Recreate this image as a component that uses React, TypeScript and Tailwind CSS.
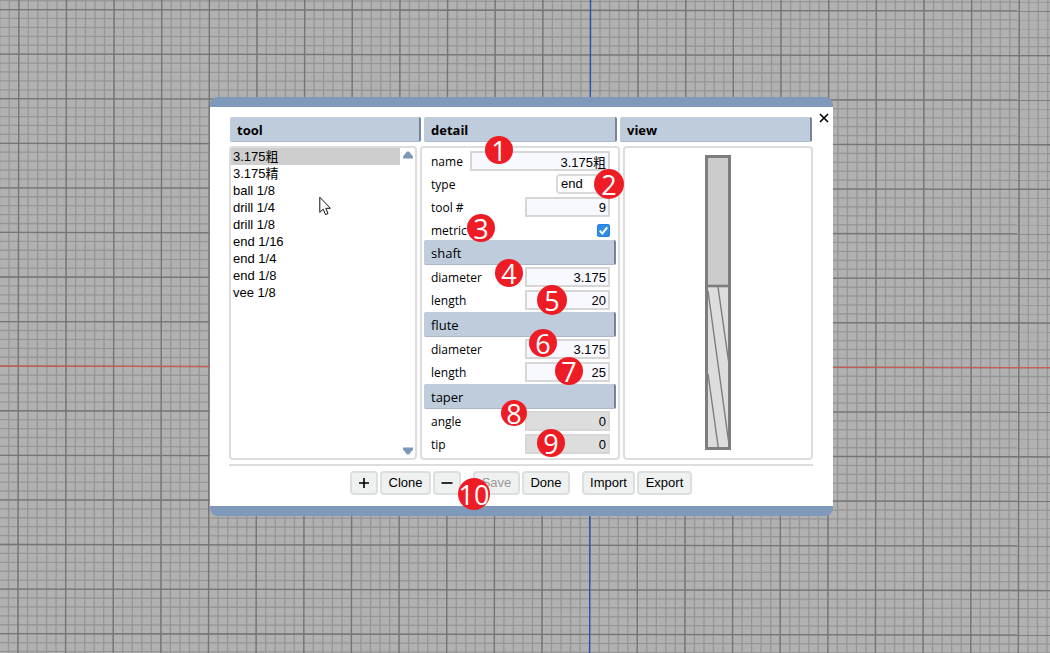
import React, { useState } from "react";

const MAJOR_X = 47.64;
const MAJOR_Y = 44.58;
const ORIGIN_X = 590;
const ORIGIN_Y = 367;

function range(from: number, to: number) {
  return Array.from({ length: to - from + 1 }, (_, i) => from + i);
}

function Workspace() {
  return (
    <svg className="absolute inset-0 h-full w-full" aria-hidden="true">
      <g transform={`rotate(0.08 ${ORIGIN_X} ${ORIGIN_Y})`}>
        <g stroke="#969696" strokeWidth="1.3">
          {range(-70, 200).map((i) => {
            const x = ORIGIN_X + (i * MAJOR_X) / 5;
            return <line key={`x${i}`} x1={x} x2={x} y1={-50} y2={2000} />;
          })}
          {range(-50, 180).map((i) => {
            const y = ORIGIN_Y + (i * MAJOR_Y) / 5;
            return <line key={`y${i}`} x1={-50} x2={2600} y1={y} y2={y} />;
          })}
        </g>
        <g stroke="#757575" strokeWidth="1.3">
          {range(-14, 40).map((i) => {
            const x = ORIGIN_X + i * MAJOR_X;
            return <line key={`x${i}`} x1={x} x2={x} y1={-50} y2={2000} />;
          })}
          {range(-10, 36).map((i) => {
            const y = ORIGIN_Y + i * MAJOR_Y;
            return <line key={`y${i}`} x1={-50} x2={2600} y1={y} y2={y} />;
          })}
        </g>
        <line x1={-50} x2={2600} y1={ORIGIN_Y} y2={ORIGIN_Y} stroke="#cf5a50" strokeWidth="1.2" />
        <line x1={ORIGIN_X} x2={ORIGIN_X} y1={-50} y2={2000} stroke="#2455b8" strokeWidth="1.3" />
      </g>
    </svg>
  );
}

function Heading({ children }: { children: React.ReactNode }) {
  return (
    <h2 className="h-[25px] rounded-xs border-r-2 border-b border-r-[#778496] border-b-[#a9b9cb] bg-[#bfccdc] pl-[7px] text-[13px] leading-[26px] font-bold">
      {children}
    </h2>
  );
}

function Section({ title, children }: { title: string; children: React.ReactNode }) {
  return (
    <section>
      <h3 className="mx-[2px] h-[25px] rounded-xs border-r-2 border-b border-r-[#778496] border-b-[#a9b9cb] bg-[#bfccdc] pl-[7px] text-[13px] leading-[26px]">
        {title}
      </h3>
      <div className="flex flex-col gap-[3px] py-[2px]">{children}</div>
    </section>
  );
}

function Row({ id, label, children }: { id: string; label: string; children: React.ReactNode }) {
  return (
    <div className="flex h-5 items-center justify-between pr-2 pl-[9px]">
      <label htmlFor={id} className="pt-[2px] text-[12px] leading-5">
        {label}
      </label>
      {children}
    </div>
  );
}

function TextField({
  id,
  label,
  value,
  wide,
  disabled,
}: {
  id: string;
  label: string;
  value: string;
  wide?: boolean;
  disabled?: boolean;
}) {
  return (
    <Row id={id} label={label}>
      <input
        id={id}
        type="text"
        defaultValue={value}
        disabled={disabled}
        className={`h-5 border-2 border-[#d6d6d6] pr-[2px] text-right font-['Liberation_Sans','Noto_Sans_CJK_SC',sans-serif] text-[13px] leading-4 ${
          wide ? "w-[140px]" : "w-[85px]"
        } ${disabled ? "bg-[#dddddd]" : "bg-[#f8f8ff]"}`}
      />
    </Row>
  );
}

const tools = [
  "3.175粗",
  "3.175精",
  "ball 1/8",
  "drill 1/4",
  "drill 1/8",
  "end 1/16",
  "end 1/4",
  "end 1/8",
  "vee 1/8",
];

function ToolList() {
  const [selected, setSelected] = useState(0);
  return (
    <div className="flex rounded-sm border-2 border-[#dddddd]">
      <ul className="flex-1 font-['Liberation_Sans','Noto_Sans_CJK_SC',sans-serif] text-[13px] leading-[17px]">
        {tools.map((tool, i) => (
          <li key={tool} className={i === selected ? "bg-[#cecece]" : ""}>
            <button
              type="button"
              onClick={() => setSelected(i)}
              className="block h-[17px] w-full pl-[2px] text-left"
            >
              {tool}
            </button>
          </li>
        ))}
      </ul>
      <div className="flex w-[15px] flex-col items-center justify-between py-[3px]">
        <svg width="10" height="8" viewBox="0 0 10 8" aria-hidden="true">
          <path d="M4 0.5h2L10 5.5V7.5H0V5.5Z" fill="#7d97b7" />
        </svg>
        <svg width="10" height="8" viewBox="0 0 10 8" aria-hidden="true">
          <path d="M0 0.5h10V2.5L6 7.5H4L0 2.5Z" fill="#7d97b7" />
        </svg>
      </div>
    </div>
  );
}

function Detail() {
  return (
    <div className="rounded-sm border-2 border-[#dddddd] pt-[3px] pb-[2px]">
      <div className="flex flex-col gap-[3px]">
        <TextField id="name" label="name" value="3.175粗" wide />
        <Row id="type" label="type">
          <select
            id="type"
            className="h-5 w-[54px] appearance-none rounded-sm border-2 border-[#dadada] bg-white pl-[3px] font-['Liberation_Sans',sans-serif] text-[13px] leading-4"
          >
            <option>end</option>
            <option>ball</option>
            <option>drill</option>
            <option>taper</option>
          </select>
        </Row>
        <TextField id="number" label="tool #" value="9" />
        <Row id="metric" label="metric">
          <span className="grid h-[13px] w-[13px] place-items-center">
            <input
              id="metric"
              type="checkbox"
              defaultChecked
              className="peer col-start-1 row-start-1 h-[13px] w-[13px] appearance-none rounded-xs border border-[#2a7fd8] bg-white checked:bg-[#2f8ce8]"
            />
            <svg
              className="pointer-events-none z-10 col-start-1 row-start-1 hidden peer-checked:block"
              width="13"
              height="13"
              viewBox="0 0 13 13"
              aria-hidden="true"
            >
              <path d="M2.8 6.8l2.6 2.6L10.2 3.4" fill="none" stroke="#fff" strokeWidth="2" />
            </svg>
          </span>
        </Row>
      </div>
      <Section title="shaft">
        <TextField id="shaft-diameter" label="diameter" value="3.175" />
        <TextField id="shaft-length" label="length" value="20" />
      </Section>
      <Section title="flute">
        <TextField id="flute-diameter" label="diameter" value="3.175" />
        <TextField id="flute-length" label="length" value="25" />
      </Section>
      <Section title="taper">
        <TextField id="taper-angle" label="angle" value="0" disabled />
        <TextField id="taper-tip" label="tip" value="0" disabled />
      </Section>
    </div>
  );
}

function View() {
  return (
    <div className="flex justify-center rounded-sm border-2 border-[#dddddd] pt-[7px]">
      <svg width="26" height="295" viewBox="0 0 26 295" role="img" aria-label="end mill">
        <rect x="1.5" y="1.5" width="23" height="130" fill="#cccccc" />
        <rect x="1.5" y="131" width="23" height="162" fill="#dddddd" />
        <g stroke="#7d7d7d" fill="none">
          <path d="M3 136L23.5 286M13 132L23.5 206M3 219L13.2 292" strokeWidth="1.4" />
          <rect x="1.5" y="1.5" width="23" height="292" strokeWidth="3" />
          <path d="M0 131H26" strokeWidth="2.6" />
        </g>
      </svg>
    </div>
  );
}

const buttonClass =
  "h-6 rounded-sm border-2 border-[#dcdfde] bg-[#eff1f1] text-center leading-5 disabled:text-[#999999]";

function Actions() {
  return (
    <div className="flex justify-center gap-[2px] font-['Liberation_Sans',sans-serif] text-[13px]">
      <button type="button" aria-label="Add" className={`${buttonClass} flex w-7 items-center justify-center`}>
        <svg width="12" height="12" viewBox="0 0 12 12" aria-hidden="true">
          <path d="M6 1v10M1 6h10" stroke="#000" strokeWidth="1.6" />
        </svg>
      </button>
      <button type="button" className={`${buttonClass} w-[51px]`}>
        Clone
      </button>
      <button type="button" aria-label="Remove" className={`${buttonClass} flex w-7 items-center justify-center`}>
        <svg width="12" height="12" viewBox="0 0 12 12" aria-hidden="true">
          <path d="M0.5 6h11" stroke="#000" strokeWidth="1.6" />
        </svg>
      </button>
      <button type="button" disabled className={`${buttonClass} ml-2.5 w-[47px]`}>
        Save
      </button>
      <button type="button" className={`${buttonClass} w-12`}>
        Done
      </button>
      <button type="button" className={`${buttonClass} ml-2.5 w-[53px]`}>
        Import
      </button>
      <button type="button" className={`${buttonClass} w-[55px]`}>
        Export
      </button>
    </div>
  );
}

const markers = [
  { n: 1, place: "left-[275px] top-[29px] size-7" },
  { n: 2, place: "left-[384px] top-[62px] size-[30px]" },
  { n: 3, place: "left-[257px] top-[107px] size-7" },
  { n: 4, place: "left-[285px] top-[152px] size-7" },
  { n: 5, place: "left-[327px] top-[178px] size-[30px]" },
  { n: 6, place: "left-[319px] top-[222px] size-7" },
  { n: 7, place: "left-[345px] top-[250px] size-7" },
  { n: 8, place: "left-[291px] top-[293px] size-[26px]" },
  { n: 9, place: "left-[327px] top-[322px] size-7" },
  { n: 10, place: "left-[248px] top-[371px] size-8" },
];

export default function App() {
  return (
    <main className="relative flex min-h-screen items-start justify-center overflow-hidden bg-[#b1b1b1] pt-[97px] pr-[7px] font-['Open_Sans','Noto_Sans_CJK_SC',sans-serif] text-black">
      <Workspace />
      <div
        role="dialog"
        aria-label="tools"
        className="relative w-[623px] rounded-lg border-y-10 border-[#7e99b9] bg-white pt-2.5 pr-5 pb-[11px] pl-[19px]"
      >
        <div className="grid grid-cols-[191px_193px_1fr] gap-[3px] px-px">
          <Heading>tool</Heading>
          <Heading>detail</Heading>
          <Heading>view</Heading>
        </div>
        <div className="mt-1 grid grid-cols-[188px_200px_1fr] gap-[3px]">
          <ToolList />
          <Detail />
          <View />
        </div>
        <hr className="mt-1 mb-[5px] border-t-2 border-[#dddddd]" />
        <Actions />
        <button
          type="button"
          aria-label="Close"
          className="absolute top-[5px] right-[3px] grid size-3 place-items-center"
        >
          <svg width="10" height="10" viewBox="0 0 10 10" aria-hidden="true">
            <path d="M1 1l8 8M9 1L1 9" stroke="#000" strokeWidth="1.6" />
          </svg>
        </button>
        <svg
          className="absolute top-[89px] left-[109px]"
          width="12"
          height="20"
          viewBox="0 0 12 20"
          aria-hidden="true"
        >
          <path
            d="M0.8 1.2V16.4L4.2 13.2L6.5 18.6L9 17.5L6.8 12.3H11.4Z"
            fill="#fff"
            stroke="#111"
            strokeWidth="1"
          />
        </svg>
        {markers.map(({ n, place }) => (
          <span
            key={n}
            className={`absolute flex items-center justify-center rounded-full bg-[#ee1c25] font-['Open_Sans',sans-serif] text-[27px] leading-none text-white ${place}`}
          >
            {n}
          </span>
        ))}
      </div>
    </main>
  );
}
